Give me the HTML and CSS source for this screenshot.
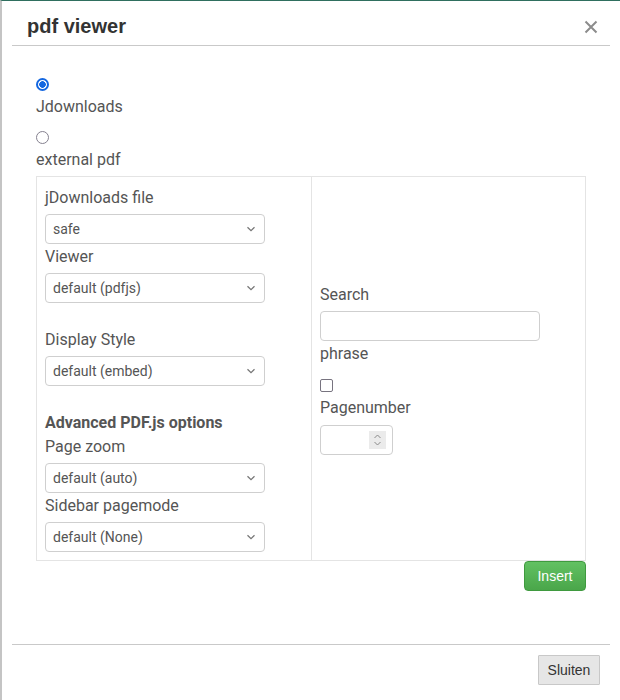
FILE: index.html
```html
<!DOCTYPE html>
<html>
<head>
<meta charset="utf-8">
<link rel="stylesheet" href="styles.css">
</head>
<body>
<div class="page">
  <div class="modal">
    <div class="modal-header">
      <h3 class="title">pdf viewer</h3>
      <button class="close" aria-label="close">
        <svg width="14" height="14" viewBox="0 0 14 14"><path d="M1.5 1.5L12.5 12.5M12.5 1.5L1.5 12.5" stroke="#8c8c8c" stroke-width="2" fill="none"/></svg>
      </button>
    </div>
    <div class="modal-body">
      <div class="choice">
        <input type="radio" name="src" id="r1" checked>
        <label for="r1">Jdownloads</label>
      </div>
      <div class="choice second">
        <input type="radio" name="src" id="r2">
        <label for="r2">external pdf</label>
      </div>
      <div class="grid">
        <div class="cell left">
          <label class="lbl">jDownloads file</label>
          <select class="sel"><option>safe</option></select>
          <label class="lbl">Viewer</label>
          <select class="sel"><option>default (pdfjs)</option></select>
          <div class="blank"></div>
          <label class="lbl">Display Style</label>
          <select class="sel"><option>default (embed)</option></select>
          <div class="blank"></div>
          <div class="lbl bold">Advanced PDF.js options</div>
          <label class="lbl">Page zoom</label>
          <select class="sel"><option>default (auto)</option></select>
          <label class="lbl">Sidebar pagemode</label>
          <select class="sel"><option>default (None)</option></select>
        </div>
        <div class="cell right">
          <label class="lbl">Search</label>
          <input class="txt" type="text">
          <label class="lbl plain">phrase</label>
          <input class="chk" type="checkbox">
          <label class="lbl">Pagenumber</label>
          <div class="num">
            <input type="text" class="num-in">
            <span class="spin">
              <svg width="17" height="18" viewBox="0 0 17 18"><path d="M5.5 7L8.5 4L11.5 7M5.5 11L8.5 14L11.5 11" stroke="#8a8a8a" stroke-width="1" fill="none"/></svg>
            </span>
          </div>
        </div>
      </div>
      <div class="actions"><button class="btn-insert">Insert</button></div>
    </div>
    <div class="modal-footer"><button class="btn">Sluiten</button></div>
  </div>
</div>
</body>
</html>
```
FILE: styles.css
```css
html, body {
  margin: 0;
  padding: 0;
  background: #ffffff;
}
.page {
  width: 620px;
  height: 700px;
  box-sizing: border-box;
  border-top: 1px solid #2f6f5f;
  border-left: 2px solid #c4c4c4;
  overflow: hidden;
}
.modal {
  background: #fff;
  height: 699px;
}
.modal-header {
  margin: 0 10px;
  padding: 13px 12px 7px 15px;
  border-bottom: 1px solid #c9c9c9;
  display: flex;
  align-items: center;
  justify-content: space-between;
}
.title {
  margin: 0;
  font: bold 20px/24px "Liberation Sans", Arial, sans-serif;
  color: #333;
}
.close {
  border: 0;
  background: none;
  padding: 0;
  width: 14px;
  height: 14px;
  display: block;
  margin-top: 1px;
}
.close svg { display: block; }
.modal-body {
  padding: 0 34px;
}
.choice input {
  -webkit-appearance: none;
  appearance: none;
  display: block;
  box-sizing: border-box;
  margin: 32px 0 3px 0;
  width: 13px;
  height: 13px;
  border-radius: 50%;
  border: 1.5px solid #85818f;
  background: #fff;
}
.choice input:checked {
  border: 2px solid #1467e0;
  background: radial-gradient(circle, #1467e0 0 3px, #fff 3.6px);
}
.choice.second input {
  margin-top: 13px;
}
.choice label {
  display: block;
  font: 16px/24px Roboto, sans-serif;
  color: #555;
  padding-top: 1px;
  margin-bottom: -1px;
}
.grid {
  margin-top: 5px;
  border: 1px solid #e4e4e4;
  display: grid;
  grid-template-columns: 275px 1fr;
  height: 385px;
  box-sizing: border-box;
}
.cell {
  padding: 8px;
  box-sizing: border-box;
  display: flex;
  flex-direction: column;
  align-items: flex-start;
}
.left {
  border-right: 1px solid #e4e4e4;
}
.right {
  justify-content: center;
}
.lbl {
  display: block;
  font: 16px/24px Roboto, sans-serif;
  color: #555;
  padding-top: 1px;
  margin-bottom: 4px;
}
.lbl.bold {
  font-weight: bold;
  margin-bottom: -1px;
}
.lbl.plain {
  margin-bottom: -1px;
}
.blank {
  height: 24px;
}
.sel {
  -webkit-appearance: none;
  appearance: none;
  width: 220px;
  height: 30px;
  box-sizing: border-box;
  border: 1px solid #cfcfcf;
  border-radius: 4px;
  background: #fff url("data:image/svg+xml,%3Csvg xmlns='http://www.w3.org/2000/svg' width='10' height='6' viewBox='0 0 10 6'%3E%3Cpath d='M1.5 1.2L5 4.6L8.5 1.2' stroke='%23777' stroke-width='1.3' fill='none'/%3E%3C/svg%3E") no-repeat right 8px center;
  font: 14px Roboto, sans-serif;
  color: #555;
  padding: 0 24px 0 7px;
  margin: 0;
}
.txt {
  width: 220px;
  height: 30px;
  box-sizing: border-box;
  border: 1px solid #cfcfcf;
  border-radius: 4px;
  margin: 0;
  padding: 0 6px;
  font: 14px Roboto, sans-serif;
}
.chk {
  -webkit-appearance: none;
  appearance: none;
  display: block;
  box-sizing: border-box;
  width: 13px;
  height: 13px;
  margin: 14px 0 3px 0;
  border: 1.5px solid #77737f;
  border-radius: 2px;
  background: #fff;
}
.num {
  width: 73px;
  height: 30px;
  box-sizing: border-box;
  border: 1px solid #cfcfcf;
  border-radius: 4px;
  display: flex;
  align-items: center;
  margin-top: 1px;
}
.num-in {
  border: 0;
  outline: none;
  width: 40px;
  flex: 1;
  min-width: 0;
  padding: 0 6px;
  background: transparent;
  font: 14px Roboto, sans-serif;
}
.spin {
  width: 17px;
  height: 18px;
  background: #ebebeb;
  margin-right: 6px;
  display: block;
}
.spin svg { display: block; }
.actions {
  display: flex;
  justify-content: flex-end;
}
.btn-insert {
  width: 62px;
  height: 30px;
  box-sizing: border-box;
  border: 1px solid #3f9a3f;
  border-radius: 4px;
  background: linear-gradient(#62c162, #4aa64a);
  color: #fff;
  font: 14px "Liberation Sans", Arial, sans-serif;
  padding: 0;
}
.modal-footer {
  margin: 53px 10px 0;
  border-top: 1px solid #c9c9c9;
  padding: 10px 10px 0 0;
  display: flex;
  justify-content: flex-end;
}
.btn {
  width: 62px;
  height: 30px;
  box-sizing: border-box;
  border: 1px solid #c8c8c8;
  border-radius: 1px;
  background: #e6e6e6;
  color: #333;
  font: 14px "Liberation Sans", Arial, sans-serif;
  padding: 0;
}
```
